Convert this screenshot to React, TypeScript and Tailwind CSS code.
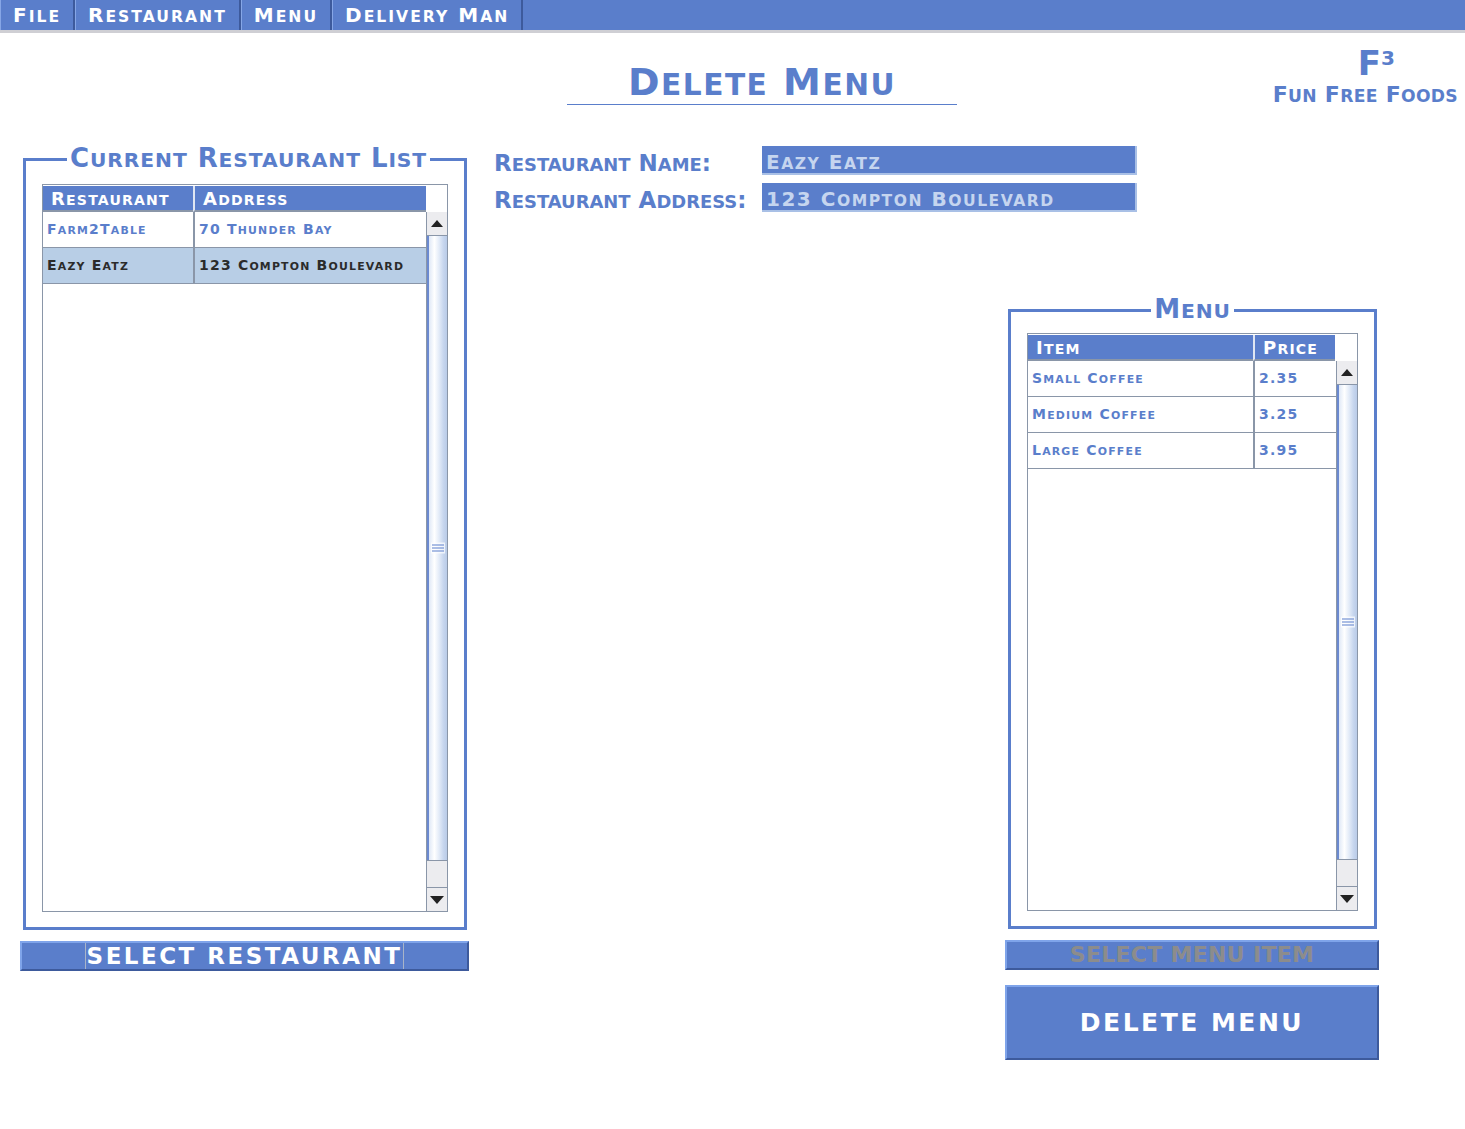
import React from 'react';

const BLUE = 'bg-[#5a7ecb]';

const menus = ['File', 'Restaurant', 'Menu', 'Delivery Man'];

const restaurants = [
  { name: 'Farm2Table', address: '70 Thunder Bay', selected: false },
  { name: 'Eazy Eatz', address: '123 Compton Boulevard', selected: true },
];

const menuItems = [
  { item: 'Small Coffee', price: '2.35' },
  { item: 'Medium Coffee', price: '3.25' },
  { item: 'Large Coffee', price: '3.95' },
];

// copperplate-style small caps: lowercase runs shown as smaller capitals
const SC = ({ text }: { text: string }) => {
  const parts = text.match(/[a-z]+|[^a-z]+/g) ?? [];
  return (
    <span className="whitespace-pre">
      {parts.map((p, i) =>
        /[a-z]/.test(p) ? (
          <span key={i} className="text-[0.78em] uppercase">
            {p}
          </span>
        ) : (
          <span key={i}>{p}</span>
        )
      )}
    </span>
  );
};

const ScrollBar = () => (
  <div className="flex w-[21px] flex-col border-l border-[#8a96a8] bg-[#ececef]">
    <div className="flex h-[24px] items-center justify-center border-b border-[#8a96a8] bg-[#ececef]">
      <svg width="12" height="7" viewBox="0 0 12 7">
        <path d="M6 0 L12 7 L0 7 Z" fill="#222" />
      </svg>
    </div>
    <div className="relative flex-1 border-l-2 border-[#6b8ad0] bg-[linear-gradient(90deg,#dfe8f6_0%,#ffffff_30%,#e4ecf8_55%,#c7d6ee_80%,#b9cbe8_100%)]">
      <div className="absolute left-[2px] top-1/2 flex w-[14px] -translate-y-1/2 flex-col gap-[2px] bg-white/70 px-[1px] py-[2px]">
        <div className="h-px bg-[#5a7ecb]" />
        <div className="h-px bg-[#5a7ecb]" />
        <div className="h-px bg-[#5a7ecb]" />
      </div>
    </div>
    <div className="h-[27px] border-t border-[#8a96a8] bg-[#ececef]" />
    <div className="flex h-[24px] items-center justify-center border-t border-[#8a96a8] bg-[#ececef]">
      <svg width="14" height="8" viewBox="0 0 14 8">
        <path d="M0 0 L14 0 L7 8 Z" fill="#222" />
      </svg>
    </div>
  </div>
);

type Col = { label: string; width: string };

const DataTable = ({
  cols,
  rows,
  height,
}: {
  cols: Col[];
  rows: { cells: string[]; selected?: boolean }[];
  height: string;
}) => (
  <div className={`flex ${height} flex-col border border-[#8a96a8] bg-white`}>
    <div className="flex h-[27px] pt-px">
      {cols.map((c, i) => (
        <div
          key={c.label}
          className={`${c.width} ${BLUE} flex items-center px-[8px] text-[18px] tracking-[1.2px] text-white ${i > 0 ? 'border-l-2 border-[#dfe6f3]' : ''} border-b-2 border-b-[#8a96a8]`}
        >
          <SC text={c.label} />
        </div>
      ))}
      <div className="flex-1 bg-white" />
    </div>
    <div className="flex min-h-0 flex-1">
      <div className="flex-1">
        {rows.map((r, ri) => (
          <div key={ri} className={`flex h-[36px] border-b border-[#8a96a8] ${r.selected ? 'bg-[#b8cee6] text-[#2b2b2b]' : 'text-[#5a7ecb]'}`}>
            {r.cells.map((cell, ci) => (
              <div
                key={ci}
                className={`${cols[ci].width} flex items-center px-[4px] text-[14px] tracking-[1.2px] ${ci > 0 ? 'border-l-2 border-[#8a96a8]' : ''}`}
              >
                <SC text={cell} />
              </div>
            ))}
          </div>
        ))}
      </div>
      <ScrollBar />
    </div>
  </div>
);

const Fieldset = ({
  title,
  center,
  children,
  className,
}: {
  title: string;
  center?: boolean;
  children: React.ReactNode;
  className?: string;
}) => (
  <fieldset className={`border-[3px] border-[#5a7ecb] px-[16px] pb-[16px] ${className ?? ''}`}>
    <legend className={`whitespace-nowrap px-[3px] text-[26px] leading-[22px] tracking-[0.9px] text-[#5a7ecb] ${center ? 'mx-auto' : 'ml-[25px]'}`}>
      <SC text={title} />
    </legend>
    {children}
  </fieldset>
);

const BevelButton = ({
  children,
  className,
}: {
  children: React.ReactNode;
  className?: string;
}) => (
  <button
    className={`${BLUE} flex items-center justify-center border-[2px] border-b-[#3d5a9c] border-l-[#7fa4ea] border-r-[#3d5a9c] border-t-[#7fa4ea] ${className ?? ''}`}
  >
    {children}
  </button>
);

const Field = ({ label, value }: { label: string; value: string }) => (
  <div className="flex h-[29px] items-center">
    <div className="w-[268px] pt-[5px] text-[23px] leading-none text-[#5a7ecb]">
      <SC text={label} />
    </div>
    <div className={`h-[29px] w-[375px] ${BLUE} flex items-center border-b-2 border-r-2 border-[#a9c0e6] px-[4px] pt-[5px] text-[20px] tracking-[1.5px] text-[#c5d5ef]`}>
      <SC text={value} />
    </div>
  </div>
);

export default function App() {
  return (
    <div
      className="relative h-[1129px] w-[1465px] overflow-hidden bg-white font-bold"
      style={{ fontFamily: '"DejaVu Sans", sans-serif' }}
    >
      {/* Menu bar */}
      <div className={`flex h-[33px] ${BLUE} border-b-[3px] border-[#cfcfd4]`}>
        {menus.map((m) => (
          <div
            key={m}
            className="flex items-center border-l border-r-2 border-l-[#86a6e6] border-r-[#3d5a9c] px-[12px] text-[20px] leading-none tracking-[2px] text-white"
          >
            <SC text={m} />
          </div>
        ))}
      </div>

      {/* Header */}
      <div className="flex h-[76px]">
        <div className="ml-[567px] mt-[26px] h-[46px] w-[390px] border-b border-[#5a7ecb] pt-[2px] text-center text-[38px] leading-[42px] tracking-[1.5px] text-[#5a7ecb]">
          <SC text="Delete Menu" />
        </div>
        <div className="ml-auto mr-[7px] mt-[12px] flex flex-col items-center text-[#5a7ecb]">
          <div className="pl-[22px] text-[34px] leading-[36px]">
            F<sup className="text-[20px]">3</sup>
          </div>
          <div className="text-[22px] leading-[28px] tracking-[0.3px]">
            <SC text="Fun Free Foods" />
          </div>
        </div>
      </div>

      {/* Body */}
      <div className="mt-[38px] flex">
        {/* Left column */}
        <div className="ml-[20px] flex w-[449px] flex-col">
          <Fieldset title="Current Restaurant List" className="mx-[3px] h-[783px] pt-[13px]">
            <DataTable
              height="h-[728px]"
              cols={[
                { label: 'Restaurant', width: 'w-[150px]' },
                { label: 'Address', width: 'w-[233px]' },
              ]}
              rows={restaurants.map((r) => ({ cells: [r.name, r.address], selected: r.selected }))}
            />
          </Fieldset>
          <BevelButton className="mt-[11px] h-[30px]">
            <span className="border-x border-[#a8b4c8] px-px text-[23px] leading-[26px] tracking-[2.5px] text-white">
              SELECT RESTAURANT
            </span>
          </BevelButton>
        </div>

        {/* Right area */}
        <div className="flex flex-1 flex-col">
          <div className="-mt-px ml-[25px] flex flex-col gap-[8px]">
            <Field label="Restaurant Name:" value="Eazy Eatz" />
            <Field label="Restaurant Address:" value="123 Compton Boulevard" />
          </div>

          <div className="ml-[536px] mt-[86px] flex w-[374px] flex-col">
            <Fieldset title="Menu" center className="ml-[3px] mr-[2px] h-[631px] pt-[11px]">
              <DataTable
                height="h-[578px]"
                cols={[
                  { label: 'Item', width: 'w-[225px]' },
                  { label: 'Price', width: 'w-[82px]' },
                ]}
                rows={menuItems.map((m) => ({ cells: [m.item, m.price] }))}
              />
            </Fieldset>
            <BevelButton className="mt-[11px] h-[30px]">
              <span className="text-[22px] leading-[26px] tracking-[0.3px] text-[#8c8c8c]">SELECT MENU ITEM</span>
            </BevelButton>
            <BevelButton className="mt-[15px] h-[75px]">
              <span className="text-[25px] tracking-[2.5px] text-white">DELETE MENU</span>
            </BevelButton>
          </div>
        </div>
      </div>
    </div>
  );
}
